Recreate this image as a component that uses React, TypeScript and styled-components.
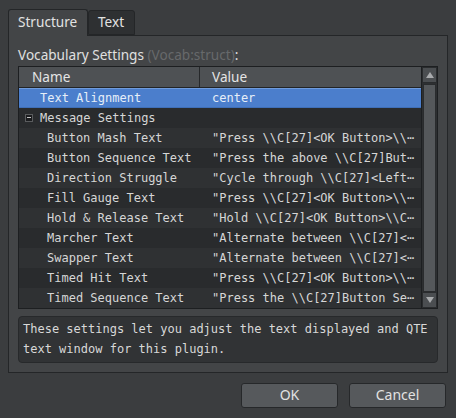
import React from "react";
import styled, { createGlobalStyle } from "styled-components";

const Global = createGlobalStyle`
  html, body { margin: 0; padding: 0; background: #3b3d3f; }
  * { box-sizing: border-box; }
`;

const SANS = `"Noto Sans", "Open Sans", "DejaVu Sans", sans-serif`;
const MONO = `"DejaVu Sans Mono", "Liberation Mono", monospace`;

const Window = styled.div`
  width: 456px;
  height: 418px;
  background: #3b3d3f;
  padding: 9px 8px 0 8px;
  display: flex;
  flex-direction: column;
  font-family: ${SANS};
  color: #dcdcdc;
`;

const TabBar = styled.div`
  display: flex;
  align-items: flex-end;
  height: 26px;
`;

const Tab = styled.div<{ $active?: boolean; $w: number }>`
  width: ${(p) => p.$w}px;
  height: ${(p) => (p.$active ? 27 : 25)}px;
  margin-bottom: ${(p) => (p.$active ? -1 : 0)}px;
  position: relative;
  z-index: ${(p) => (p.$active ? 1 : 0)};
  background: ${(p) => (p.$active ? "#434547" : "#2e3032")};
  border: 1px solid #242628;
  border-bottom: ${(p) => (p.$active ? "none" : "1px solid #242628")};
  border-radius: 3px 3px 0 0;
  font-size: 13.6px;
  line-height: ${(p) => (p.$active ? 24 : 22)}px;
  padding-left: 9px;
  color: #e2e2e2;
`;

const Panel = styled.div`
  height: 338px;
  background: #434547;
  border: 1px solid #242628;
  padding: 9px 9px 9px 9px;
  display: flex;
  flex-direction: column;
`;

const Label = styled.div`
  height: 21px;
  line-height: 20px;
  font-size: 13.6px;
  color: #e0e0e0;
`;

const Dim = styled.span`
  color: #67696b;
`;

const TableFrame = styled.div`
  height: 243px;
  border: 1px solid #1d1f21;
  display: grid;
  grid-template-columns: 1fr 16px;
  background: #2b2d2f;
`;

const List = styled.div`
  display: flex;
  flex-direction: column;
  min-width: 0;
`;

const HeaderRow = styled.div`
  display: grid;
  grid-template-columns: 180px 1fr;
  height: 21px;
  background: #4e5154;
  border-bottom: 1px solid #222426;
`;

const HeaderCell = styled.div<{ $divider?: boolean }>`
  padding-left: ${(p) => (p.$divider ? 12 : 13)}px;
  font-size: 13.6px;
  line-height: 20px;
  color: #e4e4e4;
  border-left: ${(p) => (p.$divider ? "1px solid #26282a" : "none")};
`;

const Row = styled.div<{ $alt?: boolean; $selected?: boolean }>`
  display: grid;
  grid-template-columns: 180px 1fr;
  height: 20px;
  font-family: ${MONO};
  font-size: 12px;
  line-height: 20px;
  white-space: nowrap;
  overflow: hidden;
  color: ${(p) => (p.$selected ? "#e6eef8" : "#d6d6d6")};
  background: ${(p) => (p.$selected ? "#4b7ecc" : p.$alt ? "#2f3133" : "#292b2d")};
  ${(p) => (p.$selected ? "box-shadow: inset 0 1px 0 #6f9bdc, inset 0 -1px 0 #3f6fb8;" : "")}
`;

const NameCell = styled.div<{ $indent: number }>`
  padding-left: ${(p) => p.$indent}px;
  display: flex;
  align-items: center;
  gap: 7px;
  overflow: hidden;
`;

const ValueCell = styled.div`
  padding-left: 13px;
  overflow: hidden;
`;

const Collapse = styled.span`
  width: 8px;
  height: 8px;
  background: #1b1c1e;
  border: 1px solid #5a5c5e;
  position: relative;
  flex: none;
  &::after {
    content: "";
    position: absolute;
    left: 1px;
    right: 1px;
    top: 2px;
    height: 1px;
    background: #c8c8c8;
  }
`;

const Scrollbar = styled.div`
  display: flex;
  flex-direction: column;
  background: #2d2f31;
  border-left: 1px solid #1d1f21;
`;

const ScrollButton = styled.div<{ $h: number }>`
  height: ${(p) => p.$h}px;
  background: #4b4e51;
  border: 1px solid #2a2c2e;
  display: flex;
  align-items: center;
  justify-content: center;
`;

const Thumb = styled.div`
  flex: 1;
  margin: 1px 1px 0 1px;
  background: #55585b;
  border: 1px solid #2a2c2e;
`;

const Description = styled.div`
  margin-top: 7px;
  height: 47px;
  background: #313335;
  border: 1px solid #27292b;
  border-radius: 4px;
  padding: 2px 4px;
  font-family: ${MONO};
  font-size: 12px;
  line-height: 20px;
  color: #d8d8d8;
`;

const ButtonRow = styled.div`
  display: flex;
  justify-content: flex-end;
  gap: 11px;
  margin-top: 10px;
  padding-right: 2px;
`;

const Button = styled.div`
  width: 97px;
  height: 25px;
  background: #56595c;
  border: 1px solid #26282a;
  border-radius: 3px;
  font-size: 14px;
  line-height: 22px;
  text-align: center;
  color: #e2e2e2;
`;

const Arrow = ({ up }: { up?: boolean }) => (
  <svg width="8" height="6" viewBox="0 0 8 6">
    <polygon points={up ? "4,0 8,6 0,6" : "0,0 8,0 4,6"} fill="#a9abad" />
  </svg>
);

type Item = { name: string; value: string; indent: number; group?: boolean };

const items: Item[] = [
  { name: "Text Alignment", value: "center", indent: 21 },
  { name: "Message Settings", value: "", indent: 6, group: true },
  { name: "Button Mash Text", value: '"Press \\\\C[27]<OK Button>\\\\⋯', indent: 28 },
  { name: "Button Sequence Text", value: '"Press the above \\\\C[27]But⋯', indent: 28 },
  { name: "Direction Struggle", value: '"Cycle through \\\\C[27]<Left⋯', indent: 28 },
  { name: "Fill Gauge Text", value: '"Press \\\\C[27]<OK Button>\\\\⋯', indent: 28 },
  { name: "Hold & Release Text", value: '"Hold \\\\C[27]<OK Button>\\\\C⋯', indent: 28 },
  { name: "Marcher Text", value: '"Alternate between \\\\C[27]<⋯', indent: 28 },
  { name: "Swapper Text", value: '"Alternate between \\\\C[27]<⋯', indent: 28 },
  { name: "Timed Hit Text", value: '"Press \\\\C[27]<OK Button>\\\\⋯', indent: 28 },
  { name: "Timed Sequence Text", value: '"Press the \\\\C[27]Button Se⋯', indent: 28 },
];

export default function App() {
  return (
    <>
      <Global />
      <Window>
        <TabBar>
          <Tab $active $w={80}>Structure</Tab>
          <Tab $w={47}>Text</Tab>
        </TabBar>
        <Panel>
          <Label>
            Vocabulary Settings <Dim>(Vocab:struct)</Dim>:
          </Label>
          <TableFrame>
            <List>
              <HeaderRow>
                <HeaderCell>Name</HeaderCell>
                <HeaderCell $divider>Value</HeaderCell>
              </HeaderRow>
              {items.map((it, i) => (
                <Row key={it.name} $alt={i % 2 === 0} $selected={i === 0}>
                  <NameCell $indent={it.indent}>
                    {it.group && <Collapse />}
                    {it.name}
                  </NameCell>
                  <ValueCell>{it.value}</ValueCell>
                </Row>
              ))}
            </List>
            <Scrollbar>
              <ScrollButton $h={16}>
                <Arrow up />
              </ScrollButton>
              <Thumb />
              <ScrollButton $h={16}>
                <Arrow />
              </ScrollButton>
            </Scrollbar>
          </TableFrame>
          <Description>
            These settings let you adjust the text displayed and QTE
            <br />
            text window for this plugin.
          </Description>
        </Panel>
        <ButtonRow>
          <Button>OK</Button>
          <Button>Cancel</Button>
        </ButtonRow>
      </Window>
    </>
  );
}
